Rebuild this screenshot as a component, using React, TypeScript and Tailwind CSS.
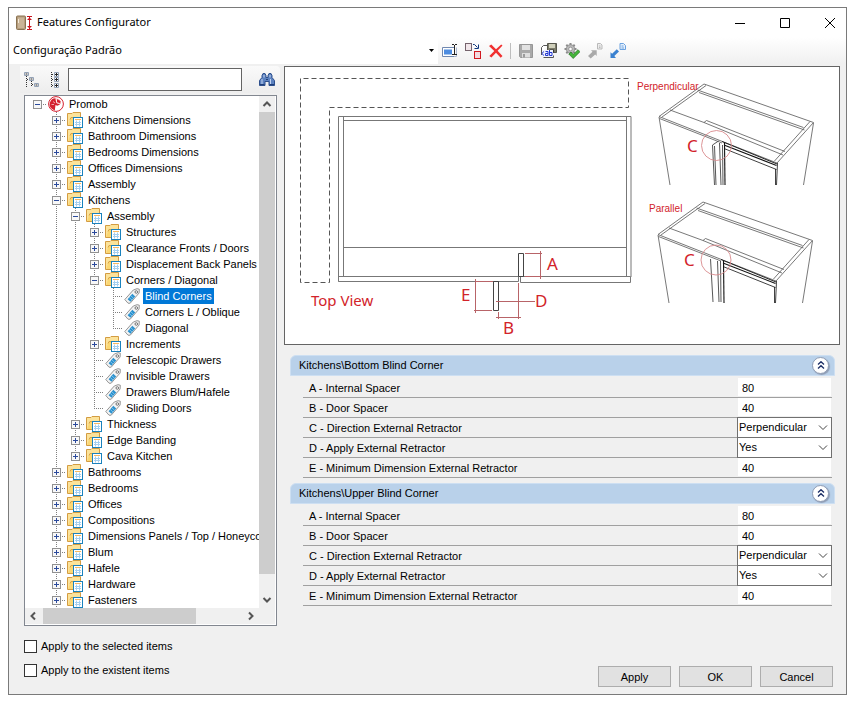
import { useId, useState, type ReactNode } from 'react';

type TreeNode = {
	label: string;
	leaf?: boolean;
	children?: TreeNode[];
};

type Row = {
	label: string;
	kind: 'root' | 'folder' | 'tag';
	expanded: boolean;
	last: boolean;
	guides: boolean[];
};

type Feature = {
	label: string;
	value: string;
	options?: string[];
};

const categories: TreeNode[] = [
	{ label: 'Kitchens Dimensions' },
	{ label: 'Bathroom Dimensions' },
	{ label: 'Bedrooms Dimensions' },
	{ label: 'Offices Dimensions' },
	{ label: 'Assembly' },
	{
		label: 'Kitchens',
		children: [
			{
				label: 'Assembly',
				children: [
					{ label: 'Structures' },
					{ label: 'Clearance Fronts / Doors' },
					{ label: 'Displacement Back Panels' },
					{
						label: 'Corners / Diagonal',
						children: [
							{ label: 'Blind Corners', leaf: true },
							{ label: 'Corners L / Oblique', leaf: true },
							{ label: 'Diagonal', leaf: true },
						],
					},
					{ label: 'Increments' },
					{ label: 'Telescopic Drawers', leaf: true },
					{ label: 'Invisible Drawers', leaf: true },
					{ label: 'Drawers Blum/Hafele', leaf: true },
					{ label: 'Sliding Doors', leaf: true },
				],
			},
			{ label: 'Thickness' },
			{ label: 'Edge Banding' },
			{ label: 'Cava Kitchen' },
		],
	},
	{ label: 'Bathrooms' },
	{ label: 'Bedrooms' },
	{ label: 'Offices' },
	{ label: 'Compositions' },
	{ label: 'Dimensions Panels / Top / Honeycomb' },
	{ label: 'Blum' },
	{ label: 'Hafele' },
	{ label: 'Hardware' },
	{ label: 'Fasteners' },
];

const features: Feature[] = [
	{ label: 'A - Internal Spacer', value: '80' },
	{ label: 'B - Door Spacer', value: '40' },
	{
		label: 'C - Direction External Retractor',
		value: 'Perpendicular',
		options: ['Perpendicular', 'Parallel'],
	},
	{ label: 'D - Apply External Retractor', value: 'Yes', options: ['Yes', 'No'] },
	{ label: 'E - Minimum Dimension External Retractor', value: '40' },
];

const flatten = (nodes: TreeNode[], guides: boolean[], top = false): Row[] =>
	nodes.flatMap((node, i) => {
		const last = !top && i === nodes.length - 1;
		const row: Row = {
			label: node.label,
			kind: node.leaf ? 'tag' : 'folder',
			expanded: !!node.children,
			last,
			guides,
		};
		return [row, ...flatten(node.children ?? [], [...guides, !last])];
	});

const rows: Row[] = [
	{ label: 'Promob', kind: 'root', expanded: true, last: true, guides: [] },
	...flatten(categories, [false], true),
];

const Icon = ({ children }: { children: ReactNode }) => (
	<svg viewBox="0 0 16 16" className="size-4 shrink-0" aria-hidden="true">
		{children}
	</svg>
);

const AppIcon = () => (
	<Icon>
		<rect x="0.5" y="1" width="9" height="13.5" rx="1" fill="#b59c7c" stroke="#8a7352" />
		<rect x="2" y="2.5" width="6" height="10.5" fill="#c9b497" />
		<path d="M2 4h1v4h-1z" fill="#f4ead8" />
		<path d="M11 1.5h5M11 14.5h5M13.5 2v12M11.5 4.5h4M12.5 3.5h2M11.5 11.5h4M12.5 12.5h2" stroke="#c8141e" fill="none" />
	</Icon>
);

const PromobIcon = () => (
	<Icon>
		<circle cx="8" cy="8" r="7.4" fill="#fff" stroke="#d5202f" strokeWidth="1" />
		<path d="M8 2.5a5.5 5.5 0 0 1 4.2 2L9.5 6.5 9 4.5z" fill="#f0a0a4" />
		<path d="M7.5 2.3 8.4 7l3.8 1.4-3 1.3-1.7-.6-.7 5.3-2.7-1.3A6 6 0 0 1 7.5 2.3z" fill="#d5202f" />
		<path d="M9 3.2 12.6 5l-.3 3-3.6-1.6z" fill="#d5202f" />
		<path d="M5 5.5l2 1.5M3.5 8.5h2.5M8 3.5l.8 3 3.4 1.2" stroke="#fff" strokeWidth="0.6" fill="none" />
	</Icon>
);

const FolderIcon = () => (
	<Icon>
		<path d="M.5 13.5V1.5H5l1-1h7.5v5" fill="#fce39a" stroke="#d39c42" />
		<path d="M1 13.500 3.500 6H13v7.500z" fill="#fbd773" />
		<path d="M3 7.500l1-2h4" fill="none" stroke="#d9a548" />
		<path d="M.500 13.500H6" stroke="#d39c42" />
		<rect x="6.5" y="5.5" width="9" height="10" fill="#fff" stroke="#1a82bd" />
		<path d="M8 7.500h6" stroke="#f6b860" />
		<path d="M8 10.5h6M8 12.500h6M9.5 8.500v6M12.5 8.500v6" stroke="#a4cff0" fill="none" />
	</Icon>
);

const TagIcon = () => (
	<Icon>
		<path d="M.800 11.500 9.300 2 13 .700l2.300.500-.200 3.800-8.900 10.200H4z" fill="#f3f3f3" stroke="#8a8a8a" strokeLinejoin="round" strokeWidth="0.900" />
		<path d="M3.600 11.200 8.300 5.800l2.900 2.600-4.700 5.400z" fill="#2b92cf" />
		<path d="M5.200 9.400 8 12M6.700 7.700l2.900 2.600" stroke="#9fd2f0" strokeWidth="0.700" />
		<circle cx="12.300" cy="4" r="1.300" fill="#fff" stroke="#666" strokeWidth="0.900" />
	</Icon>
);

const RenameIcon = () => (
	<Icon>
		<path d="M12 4.500H.500v9h12" fill="#fff" stroke="#7088b0" />
		<path d="M12.500 13.500h2v-9" fill="none" stroke="#a9b7d0" />
		<rect x="2" y="6.500" width="8" height="5" fill="#4d8ce0" />
		<path d="M10 1.5h2M13 1.5h2M12.5 2v10M10 11.5h2M13 11.5h2" stroke="#222" fill="none" />
	</Icon>
);

const MoveIcon = () => (
	<Icon>
		<rect x="0.5" y="0.5" width="6" height="7" fill="#f1e6ea" stroke="#75636c" />
		<rect x="9.5" y="8.5" width="6" height="7" fill="#f3d9de" stroke="#d01820" />
		<path d="M8 1.500h1.500l3 3M9.500 5.500h4v-4" stroke="#123a80" fill="none" />
	</Icon>
);

const DeleteIcon = () => (
	<Icon>
		<path d="M1 3 3.300 1.500l4.700 4.700 5.200-4.700 1.300.900-4.900 5.400 4.900 5.200-1.800 1.700L8 9.800l-4.600 4.700L1.300 13l5-5z" fill="#f03030" />
	</Icon>
);

const SaveIcon = () => (
	<Icon>
		<path d="M1.5 1.5h13v13h-12l-1-1z" fill="#a9a9a9" stroke="#969696" />
		<rect x="4" y="2" width="8" height="5" fill="#e2e2e2" />
		<rect x="4" y="10" width="8" height="4.5" fill="#dedede" />
		<rect x="5" y="11" width="2" height="3.5" fill="#9a9a9a" />
	</Icon>
);

const SaveAsIcon = () => (
	<Icon>
		<path d="M2.500 14.500h10v-2M.500 12V4.500l2-2H6" fill="#fff" stroke="#555" />
		<path d="M6.500.500h9v9h-9z" fill="#7b7b6a" stroke="#55554b" />
		<rect x="8" y="1" width="6" height="4" fill="#cfcfba" />
		<rect x="9" y="6.500" width="4" height="3" fill="#33332e" />
		<rect x="1" y="7" width="11" height="7" fill="#eef1fd" />
		<path d="M3 8.500.800 10.500l2.200 2M4.500 8.500h2.500v4H4.500v-2H7M8.500 7v5.500h2.500v-3H8.500" stroke="#2438d0" fill="none" />
	</Icon>
);

const GearCheckIcon = () => (
	<Icon>
		<path d="M6.500 0v12M.500 6h12M2.300 1.800l8.400 8.400M10.700 1.800 2.300 10.200" stroke="#8b8b8b" strokeWidth="2" />
		<circle cx="6.500" cy="6" r="4.300" fill="#b8b8b8" stroke="#8b8b8b" strokeWidth="0.800" />
		<circle cx="6.500" cy="6" r="1.800" fill="#fff" stroke="#8b8b8b" strokeWidth="0.800" />
		<path d="M4.800 11 7 9l2.200 2.400 4.800-4.700 2 2-6.800 6.800z" fill="#43b53a" stroke="#24701f" strokeWidth="0.700" />
	</Icon>
);

const ImportIcon = () => (
	<Icon>
		<path d="M1 13 5.500 8.700 4 7.300h5.700V13L8.200 11.400 3.700 15.500z" fill="#a9a9a9" />
		<path d="M10.500.500h3l1.500 1.500v4h-4.500z" fill="#ededed" stroke="#b9b9b9" />
		<path d="M12 3h1.500M12 4.500h1.500" stroke="#b9b9b9" />
	</Icon>
);

const ExportIcon = () => (
	<Icon>
		<path d="M.500 15V9.200l1.600 1.500L6.800 6.300l2.200 2.200L4.300 13 6 15z" fill="#3b82d0" />
		<path d="M10 .500h3.500l2 2v4H10z" fill="#e5effb" stroke="#6ba2e0" />
		<path d="M11.500 3h2M11.500 5h2.500" stroke="#6ba2e0" />
	</Icon>
);

const CollapseTreeIcon = () => (
	<Icon>
		<path d="M2.500 4v12M3 7.500h2M7.500 9v5M8 12.500h2" stroke="#333" strokeDasharray="1 1" fill="none" />
		<path d="M.500.500h4v3h-4zM5.500 5.500h4v3h-4zM10.500 11.500h4v3h-4z" fill="#fff" stroke="#94a2b6" />
		<path d="M1.500 2h2M6.500 7h2M11.500 13h2" stroke="#222" />
	</Icon>
);

const ExpandTreeIcon = () => (
	<Icon>
		<path d="M4.500 0v16M5 2.500h2M5 7.500h2M5 13.500h2" stroke="#333" strokeDasharray="1 1" fill="none" />
		<path d="M7.500.500h4v4h-4zM7.500 5.500h4v4h-4zM7.500 11.500h4v4h-4z" fill="#fff" stroke="#94a2b6" />
		<path d="M8 2.500h3M8 7.500h3M8 13.500h3M9.500 1v3M9.500 6v3M9.500 12v3" stroke="#222" />
	</Icon>
);

const BinocularsIcon = () => (
	<Icon>
		<path d="M3 3.500l1-2h2l1 2v2h2v-2l1-2h2l1 2v2l2.500 3v5H10v-4H6v4H.500v-5l2.500-3z" fill="#5c82c0" stroke="#2d4f8c" />
		<path d="M3 7v6M11.500 7v6M5 3v2.500M11 3v2.500" stroke="#c3d4f0" />
		<path d="M1 12.500h4.500M10.500 12.500H15M7 7.500h2" stroke="#21407a" />
	</Icon>
);

const ToolButton = ({ label, children }: { label: string; children: ReactNode }) => (
	<button type="button" aria-label={label} className="flex h-6 w-[23px] shrink-0 items-center justify-center">
		{children}
	</button>
);

const TitleBar = () => (
	<header className="flex h-[29px] items-center pl-[7px]">
		<AppIcon />
		<h1 className="flex-1 pl-[5px]">Features Configurator</h1>
		<div className="flex gap-[13px]">
			<button type="button" aria-label="Minimize" className="flex h-7 w-8 items-center justify-center">
				<svg viewBox="0 0 10 10" className="size-[10px]">
					<path d="M0 5.500h10" stroke="#000" />
				</svg>
			</button>
			<button type="button" aria-label="Maximize" className="flex h-7 w-8 items-center justify-center">
				<svg viewBox="0 0 10 10" className="size-[10px]">
					<path d="M.500.500h9v9h-9z" fill="none" stroke="#000" />
				</svg>
			</button>
			<button type="button" aria-label="Close" className="flex h-7 w-8 items-center justify-center">
				<svg viewBox="0 0 10 10" className="size-[10px]">
					<path d="M0 0l10 10M10 0 0 10" stroke="#000" />
				</svg>
			</button>
		</div>
	</header>
);

const Toolbar = () => (
	<div className="flex h-[27px] items-center bg-linear-to-b from-white to-[#f0f0f0]">
		<div className="relative h-full w-[429px]">
			<select aria-label="Configuration" className="h-full w-full appearance-none bg-white pl-1 outline-none">
				<option>Configuração Padrão</option>
			</select>
			<svg viewBox="0 0 5 3" className="pointer-events-none absolute top-3 right-1 h-[3px] w-[5px]">
				<path d="M0 0h5L2.500 3z" />
			</svg>
		</div>
		<ToolButton label="Rename">
			<RenameIcon />
		</ToolButton>
		<ToolButton label="Move">
			<MoveIcon />
		</ToolButton>
		<ToolButton label="Delete">
			<DeleteIcon />
		</ToolButton>
		<div className="mx-[3px] h-4 w-px bg-[#bdbdbd]" />
		<ToolButton label="Save">
			<SaveIcon />
		</ToolButton>
		<ToolButton label="Save as">
			<SaveAsIcon />
		</ToolButton>
		<ToolButton label="Apply configuration">
			<GearCheckIcon />
		</ToolButton>
		<ToolButton label="Import">
			<ImportIcon />
		</ToolButton>
		<ToolButton label="Export">
			<ExportIcon />
		</ToolButton>
	</div>
);

const Guide = ({ row }: { row: Row }) => (
	<svg viewBox="0 0 20 16" className="h-4 w-5 shrink-0" shapeRendering="crispEdges">
		<g stroke="#808080" strokeDasharray="1 1">
			{row.guides.length > 0 && <path d={row.last ? 'M9.500 0v8' : 'M9.500 0v16'} />}
			<path d="M9 8.500h10" />
		</g>
		{row.kind !== 'tag' && (
			<>
				<rect x="5.500" y="4.500" width="8" height="8" fill="#f8f8f8" stroke="#919191" />
				<path d={row.expanded ? 'M7 8.500h5' : 'M7 8.500h5M9.500 6v5'} stroke="#2b4a9c" />
			</>
		)}
	</svg>
);

const TreeRow = ({ row, selected, onSelect }: { row: Row; selected: boolean; onSelect: () => void }) => (
	<li className="flex h-4 items-center">
		{row.guides.map((line, i) => (
			<svg key={i} viewBox="0 0 19 16" className="h-4 w-[19px] shrink-0" shapeRendering="crispEdges">
				{line && <path d="M9.500 0v16" stroke="#808080" strokeDasharray="1 1" />}
			</svg>
		))}
		<Guide row={row} />
		{row.kind === 'root' && <PromobIcon />}
		{row.kind === 'folder' && <FolderIcon />}
		{row.kind === 'tag' && <TagIcon />}
		<button
			type="button"
			onClick={onSelect}
			className={selected ? 'ml-[3px] h-4 bg-[#0078d7] px-[2px] whitespace-nowrap text-white' : 'ml-[3px] h-4 px-[2px] whitespace-nowrap'}
		>
			{row.label}
		</button>
	</li>
);

const Arrow = ({ d }: { d: string }) => (
	<svg viewBox="0 0 16 16" className="size-4 shrink-0">
		<path d={d} fill="none" stroke="#555" strokeWidth="2" />
	</svg>
);

const FeatureTree = () => {
	const [selected, setSelected] = useState('Blind Corners');

	return (
		<div className="mt-[2px] mr-[3px] ml-1 border border-[#828790] bg-white pr-px pb-px">
			<div className="flex">
				<ul className="min-w-0 flex-1 overflow-hidden pl-[3px]">
					{rows.map((row, i) => (
						<TreeRow key={i} row={row} selected={row.label === selected} onSelect={() => setSelected(row.label)} />
					))}
				</ul>
				<div className="flex w-4 flex-col bg-[#f0f0f0]">
					<Arrow d="M4.500 10 8 6.500l3.500 3.500" />
					<div className="h-[462px] bg-[#cdcdcd]" />
					<div className="flex-1" />
					<Arrow d="M4.500 6 8 9.500l3.500-3.500" />
				</div>
			</div>
			<div className="flex h-4 bg-[#f0f0f0] pr-4">
				<Arrow d="M10 4.500 6.500 8l3.500 3.500" />
				<div className="ml-[2px] w-[153px] bg-[#cdcdcd]" />
				<div className="flex-1" />
				<Arrow d="M6 4.500 9.500 8 6 11.500" />
			</div>
		</div>
	);
};

const Sidebar = () => (
	<aside className="w-[260px] shrink-0">
		<div className="flex h-[27px] items-center rounded-r-sm bg-linear-to-b from-[#fafafa] to-[#ededed] pr-[2px]">
			<ToolButton label="Collapse all">
				<CollapseTreeIcon />
			</ToolButton>
			<ToolButton label="Expand all">
				<ExpandTreeIcon />
			</ToolButton>
			<input type="search" aria-label="Search features" className="ml-[2px] h-[23px] w-[174px] border border-[#646464] bg-white px-1 outline-none" />
			<div className="ml-auto">
				<ToolButton label="Find">
					<BinocularsIcon />
				</ToolButton>
			</div>
		</div>
		<FeatureTree />
	</aside>
);

const CabinetBody = () => (
	<>
		<g stroke="#555" fill="none" strokeWidth="0.8">
			<path d="M374 49.500 419 17l109.500 38.500L492 96z" />
			<path d="M377 50 421 18.500M525 54.500 489.500 94" />
			<path d="M412.500 23 518.500 60.500M414 25.500l105.500 37.500" />
			<path d="M385 43l34 12.500M419 55.500l2.500-2L500 84.500M419 55.500l79 32.500" />
			<path d="M374.500 51.500 437 76" />
			<path d="M374 50l11 68M528.500 56l-10 62" />
		</g>
		<g stroke="#111" fill="none">
			<path d="M437 74.500 492 97" strokeWidth="0.900" />
			<path d="M439 78l52.500 20.500" strokeWidth="1.100" />
			<path d="M439 81.500l52.500 21" strokeWidth="0.800" />
			<path d="M439.500 76l.500 42" strokeWidth="1.100" />
			<path d="M492.500 96l-1 22M490.500 102v16" strokeWidth="0.800" />
		</g>
	</>
);

const Diagram = () => (
	<figure className="border border-[#646464] bg-white">
		<svg viewBox="0 0 554 277" className="block h-auto w-full" role="img" aria-label="Blind corner cabinet">
			<path d="M343.500 11.500H15.500V215.500H44.500V40.500H343.500Z" fill="none" stroke="#555" strokeDasharray="5 3" />
			<g fill="none" stroke="#777">
				<path d="M53.500 214.500v-165h292.500v160.500" />
				<path d="M58.500 209.500v-160M58.500 53.500h283M341.500 49.500v160M58.500 180.500h283" />
				<path d="M53.500 209.500h180v5h-180zM235.500 209.500h110v6h-110z" />
				<path d="M233.500 186.500h5v23h-5zM208.500 214.500h5v29h-5z" stroke="#444" />
			</g>
			<g fill="none" stroke="#b86468">
				<path d="M240 186.500h17M240 209.500h17M255.500 184v28" />
				<path d="M190.500 212v34M189 243.500h18M190 214.500h18" />
				<path d="M211 234.500h39M211 250.500h25M213.500 245v7M233.500 216v36" />
			</g>
			<g fill="#d2232a" className="font-['Noto_Sans'] text-[17px]">
				<text x="262" y="203">A</text>
				<text x="176" y="234">E</text>
				<text x="250" y="240">D</text>
				<text x="218" y="267">B</text>
				<text x="402" y="85">C</text>
				<text x="399" y="199">C</text>
				<text x="26" y="239" className="text-[15px]">Top View</text>
			</g>
			<CabinetBody />
			<path d="M429.500 118l-2-40 6-4M431 118l-1.500-39M436 118l-1.500-42M438 118l-.500-40" fill="none" stroke="#444" strokeWidth="0.9" />
			<circle cx="431.500" cy="78.500" r="15" fill="none" stroke="#d98a8c" strokeWidth="0.9" />
			<g transform="translate(-1 118)">
				<CabinetBody />
				<path d="M429 117l-2.500-43M435 117l-1.500-41M437 117l-.500-41" fill="none" stroke="#444" strokeWidth="0.9" />
				<circle cx="432" cy="75" r="15" fill="none" stroke="#d98a8c" strokeWidth="0.9" />
			</g>
			<g fill="#d2232a" className="font-['Liberation_Sans'] text-[10px]">
				<text x="352" y="23">Perpendicular</text>
				<text x="364" y="145">Parallel</text>
			</g>
		</svg>
	</figure>
);

const FeatureField = ({ feature }: { feature: Feature }) => {
	const id = useId();

	return (
		<div className="flex h-5 border-b border-[#a0a0a0]">
			<label htmlFor={id} className="flex-1 pl-1.5 leading-5">
				{feature.label}
			</label>
			{feature.options ? (
				<div className="relative -my-px h-[21px] w-[95px]">
					<select id={id} defaultValue={feature.value} className="h-full w-full appearance-none border border-[#707070] bg-white pb-px pl-px outline-none">
						{feature.options.map((option) => (
							<option key={option}>{option}</option>
						))}
					</select>
					<svg viewBox="0 0 10 6" className="pointer-events-none absolute top-2 right-1 h-1.5 w-[10px]">
						<path d="M1 .500 5 4.500l4-4" fill="none" stroke="#444" />
					</svg>
				</div>
			) : (
				<input id={id} type="text" defaultValue={feature.value} className="mr-px h-[19px] w-[93px] border-b border-[#f0f0f0] bg-white pt-px pl-1 outline-none" />
			)}
		</div>
	);
};

const FeatureGroup = ({ title }: { title: string }) => (
	<section>
		<div className="flex h-[21px] items-center justify-between rounded-t-md border border-[#cddff2] bg-[#b9d1ea] pr-[5px] pb-px pl-2">
			<h2>{title}</h2>
			<button
				type="button"
				aria-label={`Collapse ${title}`}
				className="flex size-[17px] items-center justify-center rounded-full border border-[#8f9db5] bg-white shadow-[1px_1px_1px_#8f9db5]"
			>
				<svg viewBox="0 0 8 8" className="size-2">
					<path d="M1 3.500 4 .700l3 2.800M1 7.500 4 4.700l3 2.800" fill="none" stroke="#1d2f66" strokeWidth="1.300" />
				</svg>
			</button>
		</div>
		<div className="mt-[2px] mr-[3px] ml-[13px]">
			{features.map((feature) => (
				<FeatureField key={feature.label} feature={feature} />
			))}
		</div>
	</section>
);

const Footer = () => (
	<footer className="flex items-end justify-between pt-3 pr-[13px] pb-[7px] pl-[15px]">
		<div className="flex flex-col gap-2 pb-[9px]">
			{['Apply to the selected items', 'Apply to the existent items'].map((text) => (
				<label key={text} className="flex h-4 items-center gap-1">
					<input type="checkbox" className="size-[13px] appearance-none border border-[#333] bg-white checked:bg-[#0078d7]" />
					{text}
				</label>
			))}
		</div>
		<div className="flex gap-2">
			{['Apply', 'OK', 'Cancel'].map((text) => (
				<button key={text} type="button" className="h-[21px] w-[73px] border border-[#adadad] bg-[#e1e1e1]">
					{text}
				</button>
			))}
		</div>
	</footer>
);

const App = () => (
	<div className="bg-white pt-[7px] pr-[9px] pb-2 pl-2 font-['Noto_Sans',sans-serif] text-[11px] text-black">
		<main className="border border-[#7a7a7a]">
			<TitleBar />
			<Toolbar />
			<div className="bg-[#f0f0f0] pt-[2px] font-['Liberation_Sans',sans-serif] leading-4">
				<div className="flex gap-1 pr-1.5 pl-[11px]">
					<Sidebar />
					<div className="min-w-0 flex-1">
						<Diagram />
						<div className="flex flex-col gap-[5px] pt-[10px] pr-[5px] pl-1.5">
							<FeatureGroup title="Kitchens\Bottom Blind Corner" />
							<FeatureGroup title="Kitchens\Upper Blind Corner" />
						</div>
					</div>
				</div>
				<Footer />
			</div>
		</main>
	</div>
);

export default App;
